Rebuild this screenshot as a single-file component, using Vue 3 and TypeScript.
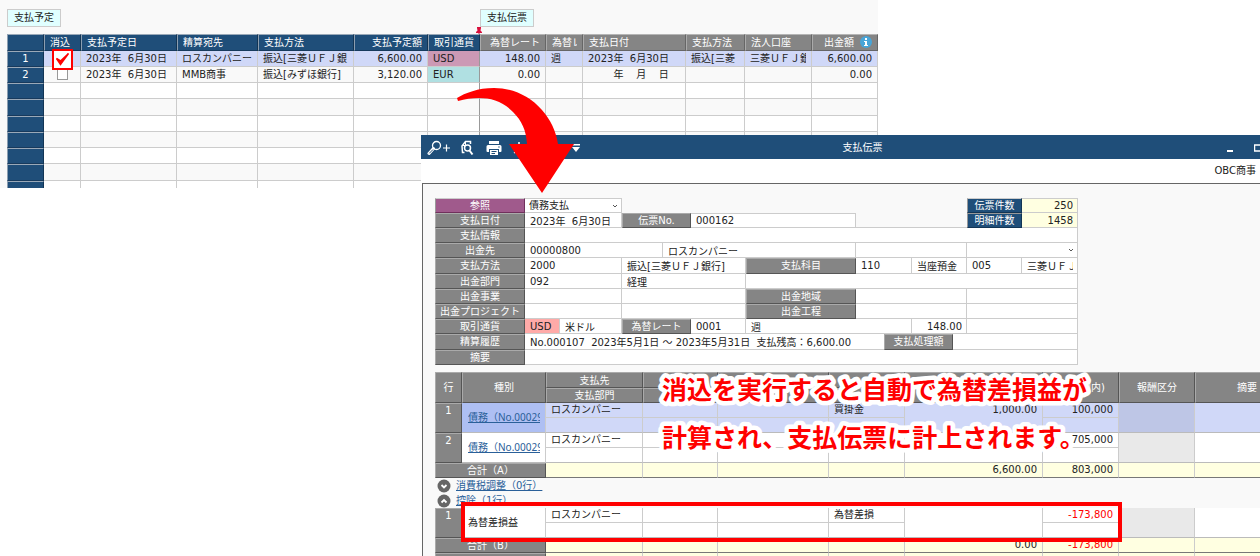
<script setup lang="ts">
interface PlanColumn { key: string; label: string; width: number; align?: 'right'; tone: 'blue' | 'gray'; info?: boolean }
interface FormCell { id?: string; kind: 'label' | 'value' | 'select' | 'empty'; width: number; text?: string; grow?: boolean; tone?: string; align?: 'right'; forId?: string; aria?: string }

const planColumns: PlanColumn[] = [
  { key: 'no', label: '', width: 37, tone: 'blue' },
  { key: 'done', label: '消込', width: 37, tone: 'blue' },
  { key: 'due', label: '支払予定日', width: 96, tone: 'blue' },
  { key: 'payee', label: '精算宛先', width: 81, tone: 'blue' },
  { key: 'method', label: '支払方法', width: 96, tone: 'blue' },
  { key: 'amount', label: '支払予定額', width: 74, align: 'right', tone: 'blue' },
  { key: 'currency', label: '取引通貨', width: 52, tone: 'blue' },
  { key: 'rate', label: '為替レート', width: 66, align: 'right', tone: 'gray' },
  { key: 'rateType', label: '為替レ', width: 37, tone: 'gray' },
  { key: 'paidOn', label: '支払日付', width: 103, tone: 'gray' },
  { key: 'paidBy', label: '支払方法', width: 59, tone: 'gray' },
  { key: 'account', label: '法人口座', width: 67, tone: 'gray' },
  { key: 'paid', label: '出金額', width: 66, align: 'right', tone: 'gray', info: true },
]

const planRows: Record<string, string>[] = [
  { no: '1', done: 'yes', due: '2023年  6月30日', payee: 'ロスカンパニー', method: '振込[三菱ＵＦＪ銀', amount: '6,600.00', currency: 'USD', rate: '148.00', rateType: '週', paidOn: '2023年  6月30日', paidBy: '振込[三菱', account: '三菱ＵＦＪ銀', paid: '6,600.00' },
  { no: '2', done: 'no', due: '2023年  6月30日', payee: 'MMB商事', method: '振込[みずほ銀行]', amount: '3,120.00', currency: 'EUR', rate: '0.00', rateType: '', paidOn: '        年    月    日', paidBy: '', account: '', paid: '0.00' },
  {}, {}, {}, {}, {}, {}, {},
]

const formRows: FormCell[][] = [
  [
    { kind: 'label', width: 90, text: '参照', tone: 'purple', forId: 'ref' },
    { kind: 'select', width: 97, id: 'ref', text: '債務支払' },
    { kind: 'empty', width: 0, grow: true },
    { kind: 'label', width: 55, text: '伝票件数', tone: 'navy', forId: 'slips' },
    { kind: 'value', width: 56, id: 'slips', text: '250', tone: 'cream', align: 'right' },
  ],
  [
    { kind: 'label', width: 90, text: '支払日付', forId: 'date' },
    { kind: 'value', width: 97, id: 'date', text: '2023年  6月30日' },
    { kind: 'label', width: 69, text: '伝票No.', forId: 'slipno' },
    { kind: 'value', width: 165, id: 'slipno', text: '000162', tone: 'topped' },
    { kind: 'empty', width: 0, grow: true, tone: 'underlined' },
    { kind: 'label', width: 55, text: '明細件数', tone: 'navy', forId: 'lines' },
    { kind: 'value', width: 56, id: 'lines', text: '1458', tone: 'cream', align: 'right' },
  ],
  [
    { kind: 'label', width: 90, text: '支払情報', forId: 'info' },
    { kind: 'value', width: 0, grow: true, id: 'info' },
  ],
  [
    { kind: 'label', width: 90, text: '出金先', forId: 'payee' },
    { kind: 'value', width: 138, id: 'payee', text: '00000800' },
    { kind: 'value', width: 193, text: 'ロスカンパニー', aria: '出金先名' },
    { kind: 'value', width: 111, aria: '出金先補足' },
    { kind: 'select', width: 0, grow: true, id: 'payeeKind', text: '', aria: '出金先区分' },
  ],
  [
    { kind: 'label', width: 90, text: '支払方法', forId: 'method' },
    { kind: 'value', width: 97, id: 'method', text: '2000' },
    { kind: 'value', width: 124, text: '振込[三菱ＵＦＪ銀行]', aria: '支払方法名' },
    { kind: 'label', width: 110, text: '支払科目', forId: 'subject' },
    { kind: 'value', width: 56, id: 'subject', text: '110' },
    { kind: 'value', width: 55, text: '当座預金', aria: '支払科目名' },
    { kind: 'value', width: 55, text: '005', aria: '口座コード' },
    { kind: 'value', width: 0, grow: true, text: '三菱ＵＦＪ', aria: '口座名' },
  ],
  [
    { kind: 'label', width: 90, text: '出金部門', forId: 'dept' },
    { kind: 'value', width: 97, id: 'dept', text: '092' },
    { kind: 'value', width: 124, text: '経理', aria: '出金部門名' },
    { kind: 'value', width: 0, grow: true, aria: '出金部門補足' },
  ],
  [
    { kind: 'label', width: 90, text: '出金事業', forId: 'biz' },
    { kind: 'value', width: 97, id: 'biz' },
    { kind: 'value', width: 124, aria: '出金事業名' },
    { kind: 'label', width: 110, text: '出金地域', forId: 'area' },
    { kind: 'value', width: 111, id: 'area' },
    { kind: 'value', width: 0, grow: true, aria: '出金地域名' },
  ],
  [
    { kind: 'label', width: 90, text: '出金プロジェクト', forId: 'project' },
    { kind: 'value', width: 97, id: 'project' },
    { kind: 'value', width: 124, aria: '出金プロジェクト名' },
    { kind: 'label', width: 110, text: '出金工程', forId: 'process' },
    { kind: 'value', width: 111, id: 'process' },
    { kind: 'value', width: 0, grow: true, aria: '出金工程名' },
  ],
  [
    { kind: 'label', width: 90, text: '取引通貨', forId: 'currency' },
    { kind: 'value', width: 35, id: 'currency', text: 'USD', tone: 'pink' },
    { kind: 'value', width: 62, text: '米ドル', aria: '通貨名' },
    { kind: 'label', width: 69, text: '為替レート', forId: 'rate' },
    { kind: 'value', width: 55, id: 'rate', text: '0001' },
    { kind: 'value', width: 166, text: '週', aria: 'レート種類' },
    { kind: 'value', width: 55, text: '148.00', align: 'right', aria: 'レート' },
    { kind: 'value', width: 0, grow: true, aria: 'レート補足' },
  ],
  [
    { kind: 'label', width: 90, text: '精算履歴', forId: 'history' },
    { kind: 'value', width: 359, id: 'history', text: 'No.000107  2023年5月1日 ～ 2023年5月31日  支払残高：6,600.00', tone: 'open' },
    { kind: 'label', width: 69, text: '支払処理額', forId: 'processed' },
    { kind: 'value', width: 0, grow: true, id: 'processed' },
  ],
  [
    { kind: 'label', width: 90, text: '摘要', forId: 'note' },
    { kind: 'value', width: 0, grow: true, id: 'note' },
  ],
]

const detailWidths: number[] = [27, 84, 97, 75, 111, 76, 138, 76, 76, 104]
const debts = [
  { no: '1', type: '債務（No.00029', payee: 'ロスカンパニー', subject: '買掛金', foreign: '1,000.00', domestic: '100,000', active: true },
  { no: '2', type: '債務（No.00029', payee: 'ロスカンパニー', subject: '', foreign: '', domestic: '705,000', active: false },
]
</script>

<template>
  <main class="desktop">
    <section class="plan">
      <div class="tabs">
        <div class="tab-slot"><button type="button" class="tab">支払予定</button></div>
        <div class="tab-pinned">
          <button type="button" class="tab">支払伝票</button>
          <svg class="pin" viewBox="0 0 6 8" width="6" height="8"><path d="M1 0H5V1L4.500 3.500L6 5V6H3.500V8H2.500V6H0V5L1.500 3.500L1 1Z" fill="#d9103c" /></svg>
        </div>
      </div>
      <table class="plan-table">
        <colgroup><col v-for="c in planColumns" :key="c.key" :style="{ width: c.width + 'px' }" /></colgroup>
        <thead>
          <tr>
            <th v-for="c in planColumns" :key="c.key" :class="[c.tone, c.align, c.key]">
              <div class="clip">{{ c.label
                }}<svg v-if="c.info" class="info" viewBox="0 0 12 12" width="12" height="12"><circle cx="6" cy="6" r="6" fill="#48a5d8" /><path d="M5 2h2v2H5zM4 5h3v4h1v1H4V9h1V6H4z" fill="#fff" /></svg></div>
            </th>
          </tr>
        </thead>
        <tbody>
          <tr v-for="(row, i) in planRows" :key="i" :class="{ selected: i === 0 }">
            <td v-for="c in planColumns" :key="c.key" :class="[c.align, c.key, row.currency]">
              <template v-if="c.key === 'done'">
                <span v-if="row.done === 'yes'" class="marked">
                  <input type="checkbox" checked aria-label="消込 1" />
                  <svg viewBox="0 0 21 21" width="21" height="21"><path d="M4.500 9.500L8.500 15.500L16.500 4.500L8.500 12Z" fill="#f00" stroke="#f00" stroke-width="1.500" /></svg>
                </span>
                <input v-else-if="row.done" type="checkbox" class="box" aria-label="消込 2" />
              </template>
              <div v-else class="clip">{{ row[c.key] }}</div>
            </td>
          </tr>
        </tbody>
      </table>
    </section>

    <section class="window">
      <header class="titlebar">
        <div class="tools">
          <button type="button" aria-label="拡大">
            <svg viewBox="0 0 24 16" width="24" height="16" fill="none" stroke="#fff"><circle cx="9.500" cy="5.500" r="4" stroke-width="1.300" /><path d="M6.500 8.500L2 13.500" stroke-width="3" stroke-linecap="round" /><path d="M6 9.500L2.300 13.300" stroke="#1f4e79" stroke-width="1" /><path d="M16 8h7M19.500 4.500v7" stroke-width="1.200" /></svg>
          </button>
          <button type="button" aria-label="検索">
            <svg viewBox="0 0 14 16" width="14" height="16" fill="none" stroke="#fff" stroke-width="1.500"><path d="M4.500 12.500H2.500L2 6L5.500 1.500H10.500V4" /><path d="M5.500 2V5.500H2.500" stroke-width="1" /><circle cx="7.500" cy="8" r="3" /><path d="M9.500 10.500L12.500 14.500" stroke-width="2" /></svg>
          </button>
          <button type="button" aria-label="印刷" class="print">
            <svg viewBox="0 0 16 16" width="16" height="16"><path d="M3 1H13V4H3Z" fill="#fff" /><path d="M2 5H14Q15.500 5 15.500 6.500V11Q15.500 12 14.500 12H13V9H3V12H1.500Q.5 12 .5 11V6.500Q.5 5 2 5Z" fill="#fff" /><path d="M4 10H12V15H4Z" fill="#fff" /><path d="M5.500 11.500H10.500M5.500 13.500H9" stroke="#1f4e79" /><circle cx="13" cy="7" r=".7" fill="#1f4e79" /></svg>
          </button>
          <button type="button" aria-label="設定" class="setting">
            <svg viewBox="0 0 16 16" width="16" height="16" fill="none" stroke="#fff" stroke-width="1.500"><path d="M6 2V5M1 13L4 11M8 6L12 13" /></svg>
          </button>
          <button type="button" aria-label="メニュー" class="more">
            <svg viewBox="0 0 8 8" width="8" height="8"><path d="M0 0H8V1.500H0ZM0 3H8L4 8Z" fill="#fff" /></svg>
          </button>
        </div>
        <h1>支払伝票</h1>
        <div class="controls">
          <button type="button" aria-label="最小化"><svg viewBox="0 0 6 8" width="6" height="8"><path d="M0 6H6V8H0Z" fill="#fff" /></svg></button>
          <button type="button" aria-label="最大化"><svg viewBox="0 0 8 8" width="8" height="8"><path d="M.5 1H7.500V7H.5Z" fill="none" stroke="#fff" stroke-width="1.500" /></svg></button>
        </div>
      </header>
      <div class="company">OBC商事</div>

      <div class="content">
        <form class="slip" @submit.prevent>
          <div v-for="(row, r) in formRows" :key="r" class="form-row">
            <template v-for="(cell, c) in row" :key="c">
              <label v-if="cell.kind === 'label'" class="cell label" :class="cell.tone" :for="cell.forId" :style="{ width: cell.width + 'px' }">{{ cell.text }}</label>
              <span v-else-if="cell.kind === 'select'" class="cell pick" :class="{ grow: cell.grow }" :style="{ width: cell.width + 'px' }">
                <select :id="cell.id" :aria-label="cell.aria"><option>{{ cell.text }}</option></select>
                <svg viewBox="0 0 6 4" width="6" height="4"><path d="M1 1L3 3L5 1" fill="none" stroke="#555" /></svg>
              </span>
              <input v-else-if="cell.kind === 'value'" :id="cell.id" type="text" class="cell value" :class="[cell.tone, cell.align, { grow: cell.grow }]" :style="{ width: cell.width + 'px' }" :value="cell.text" :aria-label="cell.aria" />
              <span v-else class="grow" :class="cell.tone"></span>
            </template>
          </div>
        </form>

        <table class="detail">
          <colgroup><col v-for="(w, i) in detailWidths" :key="i" :style="{ width: w + 'px' }" /></colgroup>
          <thead>
            <tr>
              <th rowspan="2">行</th><th rowspan="2">種別</th><th>支払先</th><th></th><th></th><th></th>
              <th rowspan="2"></th><th rowspan="2">金額(国内)</th><th rowspan="2">報酬区分</th><th rowspan="2">摘要</th>
            </tr>
            <tr><th>支払部門</th><th></th><th></th><th></th></tr>
          </thead>
          <tbody>
            <tr v-for="d in debts" :key="d.no" class="line" :class="{ active: d.active }">
              <th scope="row">{{ d.no }}</th>
              <td class="type"><a href="#">{{ d.type }}</a></td>
              <td class="split">{{ d.payee }}</td><td class="split"></td><td class="split"></td>
              <td class="split">{{ d.subject }}</td>
              <td class="num">{{ d.foreign }}</td><td class="num split">{{ d.domestic }}</td>
              <td class="off"></td><td></td>
            </tr>
            <tr class="total">
              <th colspan="2" scope="row">合計（A）</th><td></td><td></td><td></td><td></td>
              <td class="num">6,600.00</td><td class="num">803,000</td><td></td><td></td>
            </tr>
          </tbody>
        </table>

        <div class="folds">
          <div class="fold">
            <button type="button" aria-label="開く"><svg viewBox="0 0 14 14" width="14" height="14"><circle cx="7" cy="7" r="6.500" fill="#666" /><path d="M4.500 6L7 8.500L9.500 6" fill="none" stroke="#fff" stroke-width="1.800" /></svg></button>
            <a href="#">消費税調整（0行）</a>
          </div>
          <div class="fold">
            <button type="button" aria-label="閉じる"><svg viewBox="0 0 14 14" width="14" height="14"><circle cx="7" cy="7" r="6.500" fill="#666" /><path d="M4.500 8.500L7 6L9.500 8.500" fill="none" stroke="#fff" stroke-width="1.800" /></svg></button>
            <a href="#">控除（1行）</a>
          </div>
        </div>

        <table class="detail deduction">
          <colgroup><col v-for="(w, i) in detailWidths" :key="i" :style="{ width: w + 'px' }" /></colgroup>
          <tbody>
            <tr class="line">
              <th scope="row">1</th><td class="type">為替差損益</td>
              <td class="split">ロスカンパニー</td><td class="split"></td><td class="split"></td>
              <td class="split">為替差損</td><td class="num"></td><td class="num split minus">-173,800</td>
              <td class="off"></td><td></td>
            </tr>
            <tr class="total">
              <th colspan="2" scope="row">合計（B）</th><td></td><td></td><td></td><td></td>
              <td class="num">0.00</td><td class="num minus">-173,800</td><td></td><td></td>
            </tr>
            <tr class="total">
              <th colspan="2" scope="row"></th><td></td><td></td><td></td><td></td><td></td><td></td><td></td><td></td>
            </tr>
          </tbody>
        </table>
      </div>
    </section>

    <svg class="arrow" viewBox="0 0 120 110" width="120" height="110"><path d="M1 13C20 8 41 8 56 24C65 33 69 42 70 56H52L85 105L117 56H101C97 27 71 0 37 0C21 0 8 5 0 10Z" fill="#f00" /></svg>
    <svg class="caption" width="448" height="96">
      <text x="6" y="34">消込を実行すると自動で為替差損益が</text>
      <text x="6" y="82">計算され、支払伝票に計上されます。</text>
    </svg>
    <div class="frame"></div>
  </main>
</template>

<style>
body {
  margin: 0;
  background: #fff;
}
</style>

<style scoped>
* {
  box-sizing: border-box;
}
.desktop {
  position: relative;
  height: 100vh;
  min-height: 556px;
  overflow: hidden;
  background: #fff;
  color: #222;
  font: 10px/14px "DejaVu Sans", "Noto Sans CJK JP", sans-serif;
}
button {
  padding: 0;
  border: 0;
  background: none;
  color: inherit;
  font: inherit;
}
svg {
  display: block;
}

/* Payment plan */
.plan {
  width: 70%;
  max-width: 878px;
  height: 188px;
  padding: 9px 0 0 7px;
  overflow: hidden;
  background: #f9f9f9;
}
.tabs {
  display: flex;
  height: 25px;
}
.tab-slot {
  width: 473px;
}
.tab-pinned {
  position: relative;
}
.tab {
  display: block;
  height: 18px;
  padding: 0 6px;
  border: 1px solid #ccc;
  background: #e0ffff;
}
.pin {
  position: absolute;
  top: 18px;
  left: -4px;
}
.plan-table,
.detail {
  border-spacing: 0;
  table-layout: fixed;
}
.plan-table {
  width: 871px;
}
.plan-table th,
.plan-table td {
  position: relative;
  height: 16px;
  padding: 0 5px;
  border-right: 1px solid #ccc;
  border-bottom: 1px solid #ccc;
  text-align: left;
  font-weight: 400;
  white-space: pre;
}
.plan-table tr:nth-child(4n) td {
  height: 17px;
}
.plan-table thead th {
  height: 17px;
  border: 1px solid;
  border-color: #b5b5b5 #666 #666 #aaa;
  background: #858585;
  color: #fff;
}
.plan-table thead th.blue,
.plan-table td.no {
  border-width: 1px;
  border-style: solid;
  border-color: #9aa9b8 #123555 #173a5d #8c9eb0;
  background: #1f4e79;
  color: #fff;
  text-align: center;
}
.plan-table thead th.blue {
  text-align: left;
}
.plan-table thead th.right {
  text-align: right;
}
.clip {
  height: 14px;
  overflow: hidden;
}
.plan-table tbody tr:nth-child(odd) {
  background: #fff;
}
.plan-table tbody tr:nth-child(even) {
  background: #f9f9f9;
}
.plan-table tbody tr.selected {
  background: #d0d8f8;
}
.plan-table .right {
  text-align: right;
}
.plan-table .currency {
  border-right-color: #999;
}
.plan-table td.currency.USD {
  background: #cc99b5;
}
.plan-table td.currency.EUR {
  background: #b0e0e2;
}
.info {
  display: inline-block;
  margin-left: 6px;
  vertical-align: -2px;
}
.plan-table td.done {
  text-align: center;
  line-height: 0;
}
.box {
  width: 11px;
  height: 11px;
  margin: 0;
  border: 1px solid #999;
  background: #fff;
  appearance: none;
}
.marked {
  position: absolute;
  z-index: 1;
  top: -2px;
  left: 8px;
  width: 21px;
  height: 21px;
}
.marked input {
  width: 21px;
  height: 21px;
  margin: 0;
  border: 2px solid #f00;
  background: #fff;
  appearance: none;
}
.marked svg {
  position: absolute;
  inset: 0;
  pointer-events: none;
}

/* Slip window */
.window {
  position: absolute;
  top: 135px;
  right: -44px;
  bottom: 0;
  left: 421px;
  overflow: hidden;
  background: #fff;
}
.titlebar {
  display: grid;
  grid-template-columns: 1fr auto 1fr;
  align-items: center;
  height: 24px;
  padding-top: 2px;
  background: #1f4e79;
  color: #fff;
}
.titlebar h1 {
  margin: 0;
  font: inherit;
}
.tools {
  display: flex;
  align-items: center;
  padding: 0 0 0 6px;
}
.tools button + button {
  margin-left: 9px;
}
.tools .print {
  margin-left: 12px;
}
.tools .setting {
  margin-left: 11px;
}
.tools .more {
  margin-left: 43px;
}
.controls {
  display: flex;
  justify-content: flex-end;
  gap: 21px;
  padding-right: 42px;
}
.company {
  height: 24px;
  padding: 5px 48px 0 0;
  text-align: right;
}
.content {
  height: 100%;
  margin-left: 1px;
  padding: 14px 0 0 13px;
  border-top: 1px solid #666;
  border-left: 1px solid #666;
  background: #f9f9f9;
}
.slip {
  width: 643px;
  margin-bottom: 7px;
  margin-left: -1px;
}
.form-row {
  display: flex;
  height: 15px;
}
.form-row:nth-child(5n) {
  height: 16px;
}
.cell {
  flex: none;
  height: 100%;
  margin: 0;
  border: 0;
  border-right: 1px solid #ccc;
  border-bottom: 1px solid #ccc;
  border-radius: 0;
  background: #fff;
  color: #222;
  font: inherit;
}
.form-row:first-child .cell,
.topped {
  border-top: 1px solid #ccc;
}
.grow {
  flex: 1;
}
.underlined {
  border-bottom: 1px solid #ccc;
}
.label {
  border: 1px solid;
  border-color: #aaa #555 #555 #aaa;
  background: #858585;
  color: #fff;
  text-align: center;
  line-height: 13px;
  white-space: nowrap;
}
.label.purple {
  background: #a05a8c;
  border-color: #999 #70305c #70305c #999;
}
.label.navy {
  background: #1f4e79;
  border-color: #999 #123555 #123555 #999;
}
.value {
  min-width: 0;
  padding: 0 4px 0 5px;
}
.value.right {
  text-align: right;
}
.value.cream {
  background: #ffffe1;
}
.value.pink {
  background: #ffaaa8;
}
.value.open {
  border-right: 0;
}
.pick {
  position: relative;
}
.pick select {
  display: block;
  width: 100%;
  height: 100%;
  padding: 0 4px;
  border: 0;
  background: transparent;
  color: inherit;
  font: inherit;
  line-height: 13px;
  appearance: none;
}
.pick svg {
  position: absolute;
  top: 5px;
  right: 3px;
}

/* Slip details */
.detail {
  width: 864px;
  margin-left: -1px;
}
.detail th,
.detail td {
  height: 15px;
  padding: 0 5px;
  overflow: hidden;
  border-right: 1px solid #ccc;
  border-bottom: 1px solid #bbb;
  background: #fff;
  line-height: 13px;
  white-space: nowrap;
  text-align: left;
  vertical-align: top;
}
.detail th {
  padding: 0;
  border: 1px solid;
  border-color: #aaa #555 #555 #aaa;
  background: #858585;
  color: #fff;
  font-weight: 400;
  text-align: center;
}
.detail thead th {
  vertical-align: middle;
}
.detail thead tr:first-child th {
  height: 16px;
}
.detail .line th,
.detail .line td {
  height: 30px;
}
.detail .split {
  background-image: linear-gradient(#ccc, #ccc);
  background-repeat: no-repeat;
  background-position: 0 14px;
  background-size: 100% 1px;
}
.detail td.type {
  padding-left: 6px;
  vertical-align: middle;
}
.detail td.type a {
  display: block;
  overflow: hidden;
  font-family: "Noto Sans", "Noto Sans CJK JP", sans-serif;
}
.detail a,
.fold a {
  color: #2a6099;
  text-decoration: underline;
}
.detail .num {
  text-align: right;
}
.detail .off {
  background: #e9e9e9;
}
.detail .active td {
  background-color: #d0d8f8;
}
.detail .active td.type {
  background: #aebff3;
}
.detail .active td.off {
  background: #bec6e6;
}
.detail .total td {
  border-bottom-color: #777;
  background: #ffffe1;
}
.detail .minus {
  color: #f00;
}
.folds {
  height: 30px;
}
.fold {
  display: flex;
  align-items: center;
  gap: 5px;
  height: 15px;
  padding-left: 1px;
}

/* Annotations */
.arrow {
  position: absolute;
  top: 88px;
  left: 457px;
}
.caption {
  position: absolute;
  top: 365px;
  left: 656px;
  overflow: visible;
}
.caption text {
  fill: #f00;
  stroke: #fff;
  stroke-width: 9px;
  stroke-linejoin: round;
  paint-order: stroke fill;
  font: 700 25px "Noto Sans CJK JP", sans-serif;
}
.frame {
  position: absolute;
  top: 502px;
  left: 461px;
  width: 661px;
  height: 40px;
  border: 4px solid #f00;
}
</style>
